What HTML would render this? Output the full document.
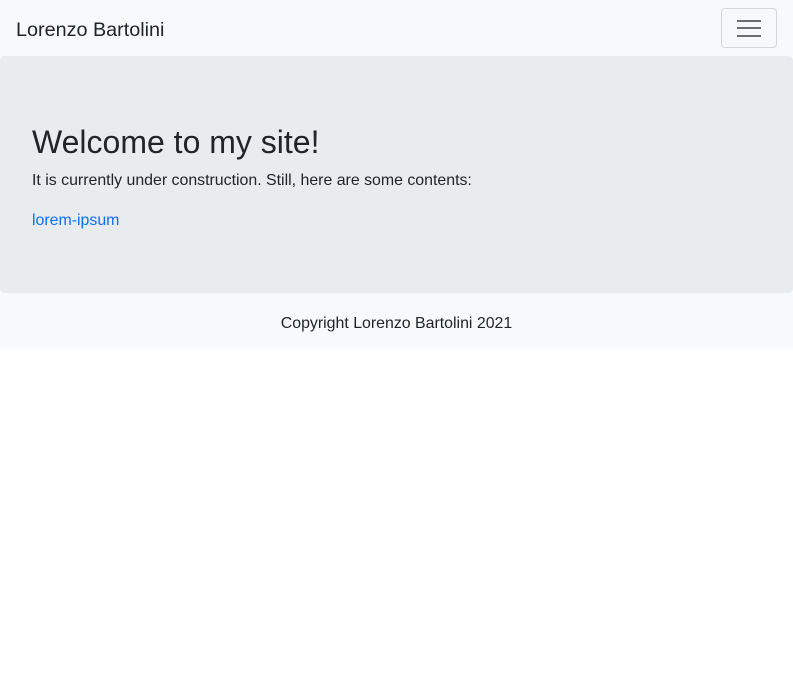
<!DOCTYPE html>
<html><head><style>
body{margin:0;font-family:"Liberation Sans",sans-serif;color:#212529;background:#fff;}
.nav{height:56px;background:#f8f9fa;position:relative;}
.brand{position:absolute;left:16px;top:19px;font-size:19.8px;color:#212529;}
.tog{position:absolute;left:721px;top:8px;width:56px;height:40px;border:1px solid #d6d7d8;border-radius:4px;box-sizing:border-box;}
.tog i{position:absolute;left:15px;width:24px;height:2px;background:#6c6d6e;}
.jumbo{background:#e9ecef;height:237px;border-radius:4px;position:relative;}
h1{position:absolute;left:32px;margin:0;font-weight:400;font-size:32px;line-height:40px;top:66px;}
.p{position:absolute;left:32px;top:116px;font-size:15.9px;}
.a{position:absolute;left:32px;top:156px;font-size:15.9px;color:#0d6efd;}
.foot{height:56px;background:#f8f9fa;text-align:center;font-size:15.9px;line-height:62px;}
</style></head><body>
<div class="nav"><div class="brand">Lorenzo Bartolini</div><div class="tog"><i style="top:11px"></i><i style="top:18px"></i><i style="top:26px"></i></div></div>
<div class="jumbo"><h1>Welcome to my site!</h1><div class="p">It is currently under construction. Still, here are some contents:</div><div class="a">lorem-ipsum</div></div>
<div class="foot">Copyright Lorenzo Bartolini 2021</div>
</body></html>
